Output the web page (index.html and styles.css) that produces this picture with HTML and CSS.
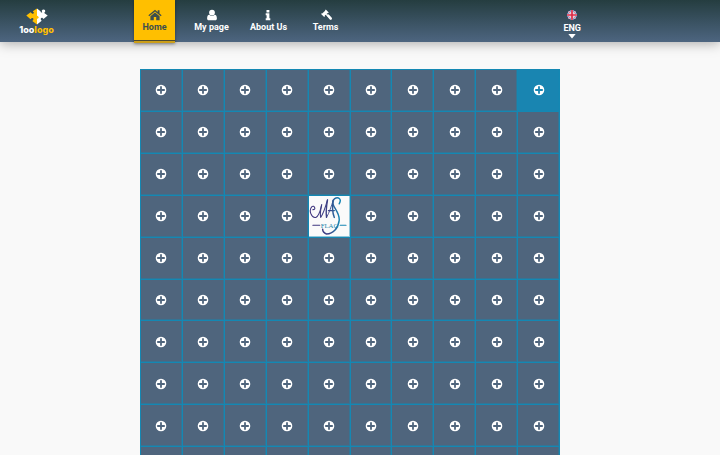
FILE: index.html
```html
<!DOCTYPE html>
<html lang="en">
<head>
<meta charset="utf-8">
<meta name="viewport" content="width=device-width, initial-scale=1">
<title>1oologo</title>
<link rel="stylesheet" href="styles.css">
</head>
<body>
<svg class="sprite" aria-hidden="true">
  <symbol id="plus" viewBox="0 0 12 12">
    <path fill-rule="evenodd" d="M6 .7a5.3 5.3 0 1 1 0 10.6A5.3 5.3 0 0 1 6 .7ZM5.100 2.200v2.900H2.200v1.800h2.900v2.900h1.800V6.900h2.900V5.100H6.900V2.200Z"/>
  </symbol>
</svg>
<header class="header">
  <a class="brand" href="#">
    <svg class="brand-mark" viewBox="0 0 22 17" aria-hidden="true">
      <path fill="#ffbf00" d="M11 .5 6.800 3.300 8 4.700Q7.500 6.200 6 5.600L4.600 4.300.3 7.500 4.500 11.200 5.800 10Q8 9.500 7.300 12L6.300 13 11 16.500Z"/>
      <path fill="#fff" d="M11 .5 14.500 3.200Q14.700 5 16.200 4.400L15.700 2.800Q17 .8 19 2.100 19.900 3.700 18.200 5L21.700 7.500 17.500 11 16.300 9.800Q14.300 9.500 14.800 11.700L15.700 12.700 11 16.500Z"/>
      <path fill="#ffbf00" d="M11 7.800a1.500 1.500 0 0 1 0 3Z"/>
    </svg>
    <span class="brand-name">1oo<span class="brand-accent">logo</span></span>
  </a>
  <nav class="nav">
    <a class="nav-link active" href="#">
      <svg class="icon" viewBox="0 0 14 12" aria-hidden="true"><path d="M7 .7.4 6.200l.8 1L7 2.400l5.800 4.800.8-1L11.500 4.400V1.200H9.700v1.700ZM7 3.400 2.400 7.200v4.100h3.400V8h2.400v3.300h3.400V7.200Z"/></svg>
      <span>Home</span>
    </a>
    <a class="nav-link" href="#">
      <svg class="icon" viewBox="0 0 14 12" aria-hidden="true"><path d="M7 .7a2.900 2.900 0 1 1 0 5.800A2.900 2.900 0 0 1 7 .7ZM4.300 5.800a4 4 0 0 0 5.400 0c1.500.1 2.200 1.500 2.200 3.700 0 1.200-.6 1.800-1.700 1.800H3.800c-1.100 0-1.700-.6-1.700-1.800 0-2.200.7-3.600 2.200-3.700Z"/></svg>
      <span>My page</span>
    </a>
    <a class="nav-link" href="#">
      <svg class="icon" viewBox="0 0 14 12" aria-hidden="true"><path d="M5.500 1h2.900v2.400H5.500ZM4.700 4.300h3.700v5h.9v1.900H4.700V9.300h.9V6.200h-.9Z"/></svg>
      <span>About Us</span>
    </a>
    <a class="nav-link" href="#">
      <svg class="icon" viewBox="0 0 14 12" aria-hidden="true"><path d="m6.800.6 2.900 2.900-.7.800-.4-.2-1 1 1.400 1.300.8-.6 2.900 3.100c.8.900-.5 2.100-1.300 1.300L8.400 6.900 6.600 5.800l-.9 1 .2.500-.7.700-3.100-3 .7-.8.400.2L6.200 1.700l-.1-.4Z"/><path d="m7.300 6.600 1.700-1.600 3.500 3.600q.7 1.500-.5 2.100-.7.300-1.200-.3Z"/></svg>
      <span>Terms</span>
    </a>
  </nav>
  <button class="language" type="button">
    <svg class="flag" viewBox="0 0 10 10" aria-hidden="true">
      <clipPath id="round"><circle cx="5" cy="5" r="5"/></clipPath>
      <g clip-path="url(#round)">
        <path fill="#285caa" d="M0 0h10v10H0Z"/>
        <path stroke="#f2dfe5" stroke-width="1.800" d="m0 0 10 10M10 0 0 10"/>
        <path stroke="#dc405a" stroke-width=".6" d="m0 0 10 10M10 0 0 10"/>
        <path stroke="#f5e4e8" stroke-width="3" d="M5 0v10M0 5h10"/>
        <path stroke="#dc2945" stroke-width="1.700" d="M5 0v10M0 5h10"/>
      </g>
    </svg>
    <span>ENG</span>
    <svg class="caret" viewBox="0 0 8 5" aria-hidden="true"><path d="M.3 0h7.400L4 4.600Z"/></svg>
  </button>
</header>
<main class="main">
  <div class="board" id="board"></div>
</main>
<template id="plus-cell">
  <button class="cell" type="button" aria-label="Add logo"><svg class="plus" aria-hidden="true"><use href="#plus"/></svg></button>
</template>
<template id="logo-cell">
  <a class="cell logo-cell" href="#" aria-label="MAS Flag">
    <svg viewBox="0 0 42 42" aria-hidden="true">
      <defs><linearGradient id="ink" x1="0" y1="0" x2="42" y2="0" gradientUnits="userSpaceOnUse"><stop offset="0" stop-color="#40317d"/><stop offset=".5" stop-color="#3c4286"/><stop offset=".75" stop-color="#1687b4"/></linearGradient></defs>
      <g fill="none" stroke="url(#ink)" stroke-linecap="round" stroke-linejoin="round">
        <path stroke-width="1.100" d="M4 14c4 0 1-5-1-3-4 4 0 12 4 11 4-2 5-9 6-13"/>
        <path stroke-width="1.100" d="M13 9c-1 5-2 9-1 13 3-4 5-11 7-18"/>
        <path stroke-width="1.400" d="M19 4c-1 6-2 12-1 18"/>
        <path stroke-width=".9" d="M18 22c3-5 5-12 7-18"/>
        <path stroke-width="1.500" d="M25 4c-1 5-1 13 1 18M20 15h6"/>
        <path stroke-width="1.500" d="M31 8c3-5-1-8-5-5-6 6 6 12 5 22-1 8-6 14-13 14-3-1-4-3-4-5"/>
        <path stroke-width="1.200" d="M4 30h7M32 30h6"/>
      </g>
      <text class="logo-word" x="12" y="33">FLAG</text>
    </svg>
  </a>
</template>
<script src="board.js"></script>
</body>
</html>
```
FILE: styles.css
```css
* { box-sizing: border-box; }

body {
  margin: 0;
  background: #f9f9f9;
  color: #fff;
  font: 700 9px/12px Roboto, "Liberation Sans", sans-serif;
}

a { color: inherit; text-decoration: none; }

button {
  padding: 0;
  border: 0;
  color: inherit;
  font: inherit;
  cursor: pointer;
}

.sprite { position: absolute; width: 0; height: 0; }

.header {
  position: sticky;
  top: 0;
  z-index: 1;
  display: grid;
  grid-template-columns: 106px 1fr auto;
  height: 42px;
  padding: 0 139px 0 20px;
  background: linear-gradient(#253d40, #4d6580);
  box-shadow: 0 1px 12px rgba(0, 0, 0, .35);
}

.brand {
  display: flex;
  flex-direction: column;
  align-items: center;
  width: 33px;
  padding-top: 8px;
}

.brand-mark { width: 22px; height: 17px; }

.brand-name {
  font: 800 9px/9px Inter, sans-serif;
}

.brand-accent { color: #ffbf00; }

.nav {
  display: grid;
  grid-template-columns: repeat(4, 57px);
  justify-items: center;
}

.nav-link {
  display: flex;
  flex-direction: column;
  align-items: center;
  padding: 9px 8px 0;
  white-space: nowrap;
}

.nav-link.active {
  height: 43px;
  border-bottom: 2px solid #cb9e18;
  background: #ffbf00;
  box-shadow: inset 0 -1px #4c4930, 0 1px 3px rgba(0, 0, 0, .4);
  color: #3d4e4d;
}

.icon { width: 14px; height: 12px; fill: currentColor; }

.language {
  display: flex;
  flex-direction: column;
  align-items: center;
  padding-top: 10px;
  background: none;
}

.flag { width: 10px; height: 10px; margin-bottom: 2px; }

.caret { width: 8px; height: 5px; fill: #fff; }

.main { padding: 27px 40px 27px 20px; }

.board {
  display: grid;
  grid-template-columns: repeat(10, 1fr);
  max-width: 420px;
  margin: 0 auto;
  border: solid #1488b3;
  border-width: 1px 0 0 1px;
}

.cell {
  display: grid;
  place-items: center;
  aspect-ratio: 1;
  min-width: 0;
  border: solid #1488b3;
  border-width: 0 1px 1px 0;
  background: #4f657d;
  box-shadow: inset -1px -1px rgba(20, 136, 179, .45);
}

.cell:hover, .cell.highlight { background: #1985b1; }

.plus { width: 12px; height: 12px; fill: #fff; }

.logo-cell, .logo-cell:hover { background: #fafafa; }

.logo-cell svg { width: 100%; height: 100%; }

.logo-word {
  fill: #2385aa;
  font: 400 7px "Liberation Serif", serif;
}
```
FILE: board.js
```js
const board = document.getElementById("board");
const plusCell = document.getElementById("plus-cell");
const logoCell = document.getElementById("logo-cell");
const logoIndex = 34;
const highlightIndex = 9;

for (let i = 0; i < 100; i++) {
  const template = i === logoIndex ? logoCell : plusCell;
  const cell = template.content.firstElementChild.cloneNode(true);
  if (i === highlightIndex) cell.classList.add("highlight");
  board.append(cell);
}
```
